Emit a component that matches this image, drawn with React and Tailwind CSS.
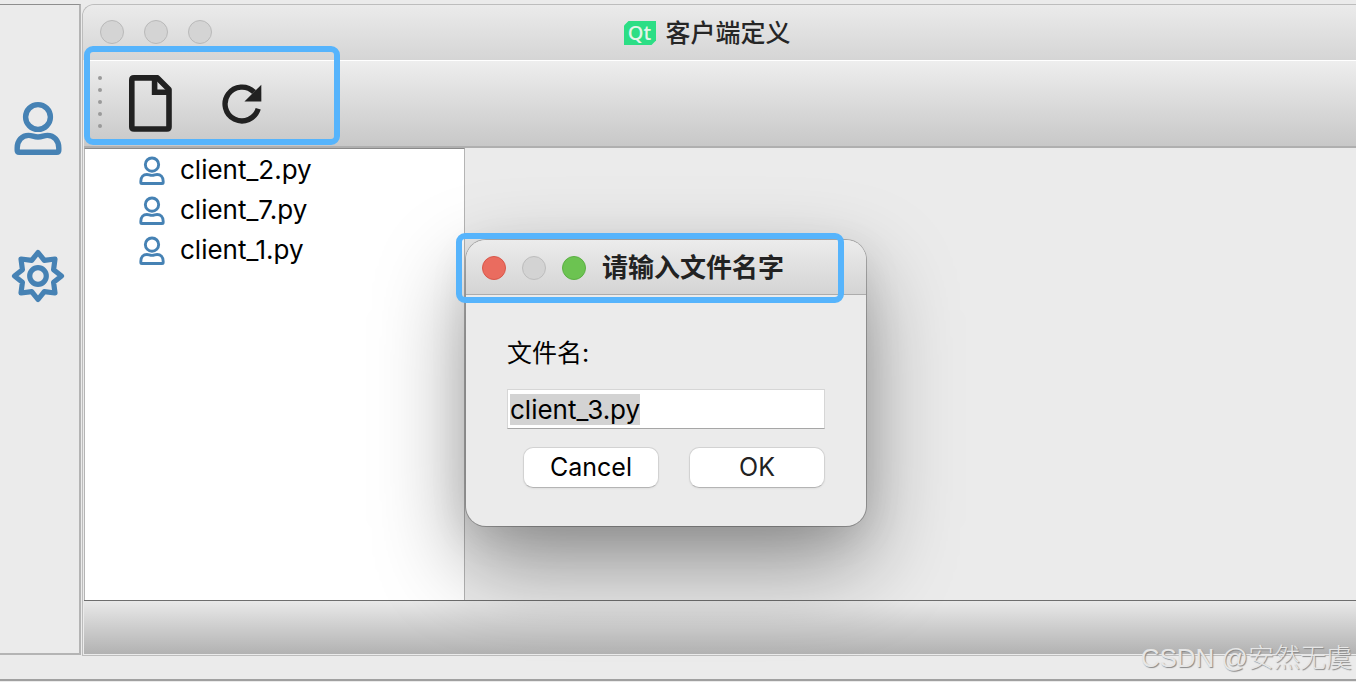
import { useEffect, useRef } from 'react';

const files = ['client_2.py', 'client_7.py', 'client_1.py'];

function UserIcon({ className }) {
  return (
    <svg viewBox="0 0 48 54" fill="none" stroke="currentColor" strokeWidth="5.4" className={className} aria-hidden="true">
      <circle cx="24" cy="16" r="12.4" />
      <path d="M3.2 49.2V47C3.2 39.5 8 34.4 14.5 34.4C18.5 34.4 19.5 36 24 36S29.5 34.4 33.5 34.4C40 34.4 44.8 39.5 44.8 47V49.2Q44.8 51.2 42.8 51.2H5.2Q3.2 51.2 3.2 49.2Z" />
    </svg>
  );
}

function GearIcon({ className }) {
  return (
    <svg viewBox="-27 -27 54 54" fill="none" stroke="currentColor" strokeWidth="5.2" strokeLinejoin="round" className={className} aria-hidden="true">
      <path d="M0 -23.5L6.3 -15.6L17 -17L15.6 -6.3L23.5 0L15.6 6.3L17 17L6.3 15.6L0 23.5L-6.3 15.6L-17 17L-15.6 6.3L-23.5 0L-15.6 -6.3L-17 -17L-6.3 -15.6Z" />
      <circle r="8.3" />
    </svg>
  );
}

function FileIcon({ className }) {
  return (
    <svg viewBox="0 0 43 57" fill="none" stroke="currentColor" strokeWidth="5.6" className={className} aria-hidden="true">
      <path d="M5 2.9H28.5L40 14.4V52Q40 54 38 54H5Q2.8 54 2.8 52V5Q2.8 2.9 5 2.9Z" strokeLinejoin="round" />
      <path d="M25.6 3V17.2H40" />
    </svg>
  );
}

function RefreshIcon({ className }) {
  return (
    <svg viewBox="0 0 24 24" className={className} aria-hidden="true">
      <path d="M18.7 14A7 7 0 1 1 17 7.1" fill="none" stroke="currentColor" strokeWidth="2.2" />
      <path d="M20 4V11H13Z" fill="currentColor" />
    </svg>
  );
}

function QtLogo() {
  return (
    <span className="relative flex h-6 w-8 items-center justify-center text-[20px] leading-6 font-medium text-[#e4f5ea]">
      <svg viewBox="0 0 32 24" className="absolute inset-0 h-6 w-8" aria-hidden="true">
        <path d="M4.5 0H32V19.5L27.5 24H0V4.5Z" fill="#2cde85" />
      </svg>
      <span className="relative font-['Noto_Sans',sans-serif]">Qt</span>
    </span>
  );
}

function Light({ className, label }) {
  return <button type="button" aria-label={label} className={`size-6 rounded-full border ${className}`} />;
}

function FileDialog() {
  const inputRef = useRef(null);

  useEffect(() => {
    inputRef.current.focus();
    inputRef.current.select();
  }, []);

  return (
    <form
      role="dialog"
      aria-labelledby="dialog-title"
      className="absolute left-[466px] top-[240px] w-[400px] rounded-[20px] bg-[#ebebeb] shadow-[0_0_0_1px_rgba(0,0,0,0.25),0_36px_90px_rgba(0,0,0,0.4),0_10px_40px_rgba(0,0,0,0.08)]"
    >
      <header className="flex h-[55px] items-center gap-4 rounded-t-[20px] border-b border-[#acacac] bg-linear-to-b from-[#ececec] to-[#d4d4d4] px-4 pt-px">
        <Light label="关闭" className="border-[#d8574a] bg-[#ea6c5f]" />
        <Light label="最小化" className="border-[#bdbdbd] bg-[#d3d3d3]" />
        <Light label="缩放" className="border-[#5bb043] bg-[#6cc351]" />
        <h2 id="dialog-title" className="text-[26px] leading-8 font-bold text-[#222]">请输入文件名字</h2>
      </header>
      <div className="px-[41px] pt-10 pb-[38px]">
        <label htmlFor="file-name" className="block text-[25px] leading-9">文件名:</label>
        <input
          id="file-name"
          ref={inputRef}
          type="text"
          defaultValue="client_3.py"
          className="mt-[18px] block h-10 w-full border border-[#d6d6d6] border-b-[#a6a6a6] bg-white px-0.5 text-[26px] leading-8 outline-none selection:bg-[#d3d3d3] selection:text-black"
        />
        <div className="mt-[18px] flex justify-end gap-[30px]">
          <button type="button" className="h-[41px] w-[136px] rounded-[10px] border border-[#d2d2d2] border-b-[#b4b4b4] bg-white pb-0.5 text-[25px] leading-8 shadow-xs">
            Cancel
          </button>
          <button type="submit" className="h-[41px] w-[136px] rounded-[10px] border border-[#d2d2d2] border-b-[#b4b4b4] bg-white pb-0.5 text-[25px] leading-8 text-[#222] shadow-xs">
            OK
          </button>
        </div>
      </div>
    </form>
  );
}

export default function App() {
  return (
    <div className="relative flex min-h-screen flex-col overflow-hidden bg-[#ebebeb] pt-1 font-[Inter,'Noto_Sans_CJK_SC',sans-serif] text-black">
      <div className="flex flex-1 gap-px">
        <aside className="mb-px flex w-[81px] shrink-0 flex-col items-center gap-[94px] border-t border-r-2 border-b-2 border-t-[#8e8e8e] border-r-[#b4b4b4] border-b-[#b4b4b4] pt-24 pr-1 text-[#4682b4]">
          <button type="button" aria-label="客户端">
            <UserIcon className="h-[54px] w-12" />
          </button>
          <button type="button" aria-label="设置">
            <GearIcon className="size-[54px]" />
          </button>
        </aside>

        <main className="flex min-w-0 flex-1 flex-col rounded-tl-xl border-t border-b border-l border-[#bdbdbd] pb-px">
          <header className="flex h-[55px] shrink-0 items-center rounded-tl-xl bg-linear-to-b from-[#ebebeb] to-[#d5d5d5] pr-[42px]">
            <div className="flex flex-1 gap-5 pb-0.5 pl-[17px]">
              <Light label="关闭窗口" className="border-[#b9b9b9] bg-[#d4d4d4]" />
              <Light label="最小化窗口" className="border-[#b9b9b9] bg-[#d4d4d4]" />
              <Light label="缩放窗口" className="border-[#b9b9b9] bg-[#d4d4d4]" />
            </div>
            <div className="flex items-center gap-[10px]">
              <QtLogo />
              <h1 className="text-[25px] leading-8 font-medium text-[#262626]">客户端定义</h1>
            </div>
            <div className="flex-1" />
          </header>

          <div className="ml-px flex h-[88px] shrink-0 items-center border-t border-b-2 border-t-white border-b-[#afafaf] bg-linear-to-b from-[#eeeeee] to-[#c8c8c8] pl-[14px] text-[#212121]">
            <div className="flex flex-col gap-2 pb-1">
              {[0, 1, 2, 3, 4].map((dot) => (
                <span key={dot} className="size-1 rounded-full bg-[#9a9a9a]" />
              ))}
            </div>
            <button type="button" aria-label="新建" className="ml-[27px]">
              <FileIcon className="h-[57px] w-[43px]" />
            </button>
            <button type="button" aria-label="刷新" className="ml-[41px]">
              <RefreshIcon className="size-[58px]" />
            </button>
          </div>

          <div className="ml-px flex flex-1 border-b border-[#6e6e6e]">
            <ul className="w-[381px] shrink-0 border-t border-r border-l border-t-[#8a8a8a] border-r-[#b4b4b4] border-l-[#b4b4b4] bg-white pt-px">
              {files.map((file) => (
                <li key={file} className="flex h-10 items-center gap-[15px] pl-[54px] text-[26px] leading-8">
                  <UserIcon className="h-[29px] w-[26px] text-[#4682b4]" />
                  {file}
                </li>
              ))}
            </ul>
            <section className="flex-1" />
          </div>

          <div className="ml-px h-[53px] shrink-0 bg-linear-to-b from-[#e9e9e9] to-[#b2b2b2]" />
        </main>
      </div>
      <div className="mb-px h-[25px] shrink-0 border-b-2 border-[#a0a0a0]" />

      <FileDialog />

      <div className="pointer-events-none absolute left-[84px] top-[46px] h-[99px] w-[256px] rounded-[9px] border-6 border-[#56b4fc]" />
      <div className="pointer-events-none absolute left-[456px] top-[233px] h-[70px] w-[388px] rounded-[9px] border-6 border-[#56b4fc]" />

      <p className="absolute right-1 bottom-1.5 text-[26px] leading-9 font-light text-[#e6e6e6] [text-shadow:1px_1px_1px_#888] font-['Liberation_Sans','Noto_Sans_CJK_SC',sans-serif]">
        CSDN @安然无虞
      </p>
    </div>
  );
}
